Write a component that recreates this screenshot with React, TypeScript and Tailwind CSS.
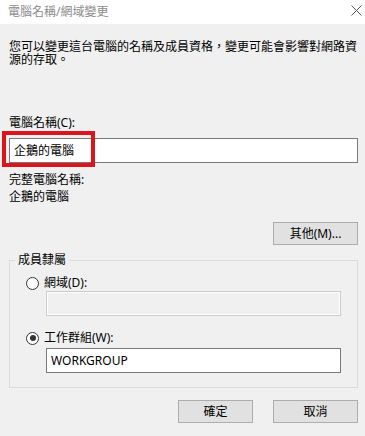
import React from "react";

const font = { fontFamily: '"Noto Sans", "Noto Sans CJK TC", sans-serif' };

function Radio({ checked }: { checked?: boolean }) {
  return (
    <span className="w-[13px] h-[13px] rounded-full border border-[#333333] bg-white flex items-center justify-center shrink-0">
      {checked && <span className="w-[6px] h-[6px] rounded-full bg-[#333333]" />}
    </span>
  );
}

function Btn({ children, width }: { children: React.ReactNode; width: string }) {
  return (
    <button className={`${width} h-[23px] border border-[#adadad] bg-[#e1e1e1] text-[12px] leading-none text-black flex items-center justify-center`}>
      {children}
    </button>
  );
}

export default function App() {
  return (
    <div className="relative w-[365px] h-[436px] bg-[#f0f0f0] text-[12px] text-black overflow-hidden" style={font}>
      {/* title bar */}
      <div className="h-[24px] bg-white flex items-center justify-between pl-[8px] pr-[3px]">
        <span className="text-[12px] leading-[14px] text-[#8c8c8c]">電腦名稱/網域變更</span>
        <svg width="11" height="11" viewBox="0 0 11 11" className="mb-[3px]">
          <path d="M0.5 0.5 L10.5 10.5 M10.5 0.5 L0.5 10.5" stroke="#555555" strokeWidth="1" fill="none" />
        </svg>
      </div>

      <div className="pl-[9px] pr-[7px]">
        <p className="mt-[16px] leading-[13px]">您可以變更這台電腦的名稱及成員資格，變更可能會影響對網路資源的存取。</p>

        <label className="block mt-[50px] leading-[14px]">電腦名稱(C):</label>
        <div className="mt-[8px] h-[25px] border border-[#7a7a7a] bg-white flex items-center pl-[4px] leading-[14px]">企鵝的電腦</div>

        <p className="mt-[10px] leading-[14px]">完整電腦名稱:</p>
        <p className="mt-[3px] leading-[14px]">企鵝的電腦</p>

        <div className="mt-[18px] flex justify-end">
          <Btn width="w-[85px]">其他(M)...</Btn>
        </div>

        <fieldset className="mt-[8px] border border-[#dcdcdc] pb-[14px]">
          <legend className="ml-[5px] px-[3px] leading-[14px]">成員隸屬</legend>
          <div className="mt-[9px] pl-[16px] flex items-center gap-[5px] leading-[14px]">
            <Radio />
            <span>網域(D):</span>
          </div>
          <div className="mt-[1px] ml-[36px] w-[295px] h-[25px] border border-[#cccccc] shadow-[inset_0_0_0_1px_#ffffff]" />
          <div className="mt-[15px] pl-[16px] flex items-center gap-[5px] leading-[14px]">
            <Radio checked />
            <span>工作群組(W):</span>
          </div>
          <div className="mt-[3px] ml-[36px] w-[295px] h-[25px] border border-[#7a7a7a] bg-white flex items-center pl-[4px] leading-[14px]">WORKGROUP</div>
        </fieldset>

        <div className="mt-[12px] flex justify-end gap-[20px]">
          <Btn width="w-[75px]">確定</Btn>
          <Btn width="w-[85px]">取消</Btn>
        </div>
      </div>

      {/* red highlight */}
      <div className="absolute left-[2px] top-[131px] w-[93px] h-[36px] border-[4px] border-[#dc151c]" />
    </div>
  );
}
